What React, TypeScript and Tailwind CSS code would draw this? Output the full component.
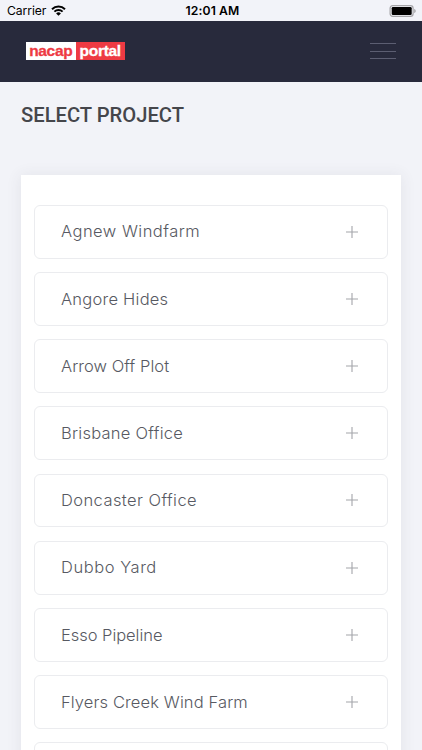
const projects = [
  { name: "Agnew Windfarm", tracking: "tracking-[0.48px]" },
  { name: "Angore Hides", tracking: "tracking-[0.24px]" },
  { name: "Arrow Off Plot", tracking: "tracking-[0.05px]" },
  { name: "Brisbane Office", tracking: "tracking-[0.25px]" },
  { name: "Doncaster Office", tracking: "tracking-[0.42px]" },
  { name: "Dubbo Yard", tracking: "tracking-[0.55px]" },
  { name: "Esso Pipeline", tracking: "tracking-[-0.04px]" },
  { name: "Flyers Creek Wind Farm", tracking: "tracking-[0.12px]" },
  { name: "", tracking: "tracking-normal" },
];

function StatusBar() {
  return (
    <div className="flex h-[20.5px] items-center justify-between bg-[#f2f3f9] pt-px pr-1.5 pl-[7px] text-black">
      <div className="flex w-[120px] items-center gap-[5px]">
        <span className="text-[12.2px] leading-none tracking-[-0.1px]">Carrier</span>
        <svg className="h-[11px] w-[15px]" viewBox="0 0 15 11" fill="none" stroke="currentColor">
          <path strokeWidth="2" d="M1 4.2a9.3 9.3 0 0 1 13 0" />
          <path strokeWidth="1.9" d="M3.4 6.7a5.8 5.8 0 0 1 8.2 0" />
          <path fill="currentColor" stroke="none" d="M7.5 10.8 5.1 8.4a3.4 3.4 0 0 1 4.8 0z" />
        </svg>
      </div>
      <span className="pl-[2px] text-center text-[12.2px] leading-none font-semibold tracking-[0.1px] whitespace-nowrap">
        12:01 AM
      </span>
      <div className="flex w-[120px] justify-end">
        <svg className="h-3 w-[27px]" viewBox="0 0 27 12">
          <rect x="1.1" y="0.6" width="23" height="10.8" rx="2.6" fill="none" stroke="#a5a5a9" strokeWidth="1.2" />
          <rect x="2.7" y="2" width="20" height="8" rx="1.3" fill="#000" />
          <path fill="#a5a5a9" d="M25.2 4c2 .4 2 3.6 0 4z" />
        </svg>
      </div>
    </div>
  );
}

function Header() {
  return (
    <header className="flex h-[61px] items-center justify-between bg-[#282a3c] px-[26px]">
      <div className="flex h-[18px] w-[99px] font-['Liberation_Sans',sans-serif] text-[15.5px] leading-[17px] font-bold">
        <span className="flex w-[49.5px] justify-center bg-white tracking-[-0.35px] text-[#ee3a43] [-webkit-text-stroke:0.3px]">
          nacap
        </span>
        <span className="flex w-[49.5px] justify-center bg-[#ee3a43] tracking-[-0.3px] text-white [-webkit-text-stroke:0.3px]">
          portal
        </span>
      </div>
      <button aria-label="Menu" className="flex w-[26px] flex-col gap-[6.3px]">
        <span className="h-px w-full bg-[#5c5e72]" />
        <span className="h-px w-full bg-[#5c5e72]" />
        <span className="h-px w-full bg-[#5c5e72]" />
      </button>
    </header>
  );
}

export default function App() {
  return (
    <div className="h-[750px] w-[422px] overflow-hidden bg-[#f2f3f8] font-['Inter','Liberation_Sans',sans-serif]">
      <StatusBar />
      <Header />
      <main className="px-[21px] pt-[21px]">
        <h1 className="font-['Roboto',sans-serif] text-[20.2px] leading-6 font-medium text-[#45464b]">SELECT PROJECT</h1>

        {/* Project list */}
        <div className="mt-[48.8px] bg-white px-[13px] pt-[29.5px] shadow-[0_1px_14px_1px_rgba(69,65,78,0.08)]">
          <ul className="flex flex-col gap-[13.4px]">
            {projects.map((project) => (
              <li
                key={project.name}
                className="flex h-[53.8px] items-center justify-between rounded-[6px] border border-[#ebecef] pr-[29px] pl-[26px]"
              >
                <span className={`text-[16.5px] leading-none font-light whitespace-nowrap text-[#575962] ${project.tracking}`}>
                  {project.name}
                </span>
                <svg className="h-3 w-3 shrink-0" viewBox="0 0 12 12" stroke="#a4a5aa" strokeWidth="1.1">
                  <path d="M0 6h12M6 0v12" />
                </svg>
              </li>
            ))}
          </ul>
        </div>
      </main>
    </div>
  );
}
